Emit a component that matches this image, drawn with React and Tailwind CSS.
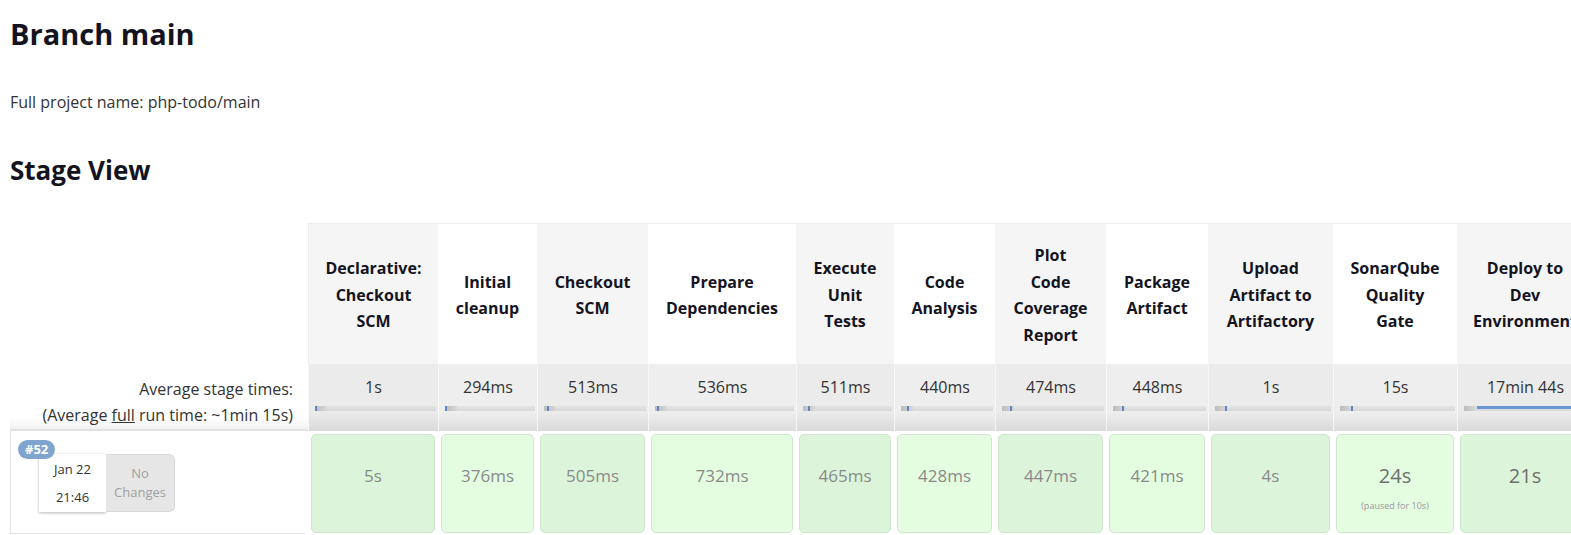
import React from 'react'

const STAGES = [
  { name: ['Declarative:', 'Checkout', 'SCM'], w: 130, avg: '1s', run: '5s', tick: 0 },
  { name: ['Initial', 'cleanup'], w: 99, avg: '294ms', run: '376ms', tick: 0 },
  { name: ['Checkout', 'SCM'], w: 111, avg: '513ms', run: '505ms', tick: 3 },
  { name: ['Prepare', 'Dependencies'], w: 148, avg: '536ms', run: '732ms', tick: 2 },
  { name: ['Execute', 'Unit', 'Tests'], w: 98, avg: '511ms', run: '465ms', tick: 5 },
  { name: ['Code', 'Analysis'], w: 101, avg: '440ms', run: '428ms', tick: 6 },
  { name: ['Plot', 'Code', 'Coverage', 'Report'], w: 111, avg: '474ms', run: '447ms', tick: 8 },
  { name: ['Package', 'Artifact'], w: 102, avg: '448ms', run: '421ms', tick: 9 },
  { name: ['Upload', 'Artifact to', 'Artifactory'], w: 125, avg: '1s', run: '4s', tick: 10 },
  { name: ['SonarQube', 'Quality', 'Gate'], w: 124, avg: '15s', run: '24s', note: '(paused for 10s)', tick: 11, big: true },
  { name: ['Deploy to', 'Dev', 'Environment'], w: 136, avg: '17min 44s', run: '21s', tick: 13, long: true, big: true },
]

function AvgBar({ tick, long }) {
  return (
    <div className="relative ml-[6px] mr-[2px] h-[5px] bg-[linear-gradient(to_bottom,#e4e4e4,#d8d8d8)]">
      <div className="absolute left-0 top-0 h-full w-[12px] bg-[linear-gradient(to_right,#bdbdbd,#c9c9c9,#d8d8d8)]" />
      {long
        ? <div className="absolute top-0 right-0 h-[3px] bg-[#6a97d4]" style={{ left: tick }} />
        : <div className="absolute top-0 h-full w-[2px] bg-[#5a87c8]" style={{ left: tick }} />}
    </div>
  )
}

export default function App() {
  return (
    <div className="w-[1571px] h-[535px] overflow-hidden bg-white font-['Open_Sans',sans-serif] text-[#333]">
      <div className="pl-[10px]">
        <h1 className="pt-[16px] text-[29px] leading-[36px] font-bold text-[#14141f]">Branch main</h1>
        <p className="mt-[38px] text-[16px] leading-[24px] text-[#333]">Full project name: php-todo/main</p>
        <h2 className="mt-[41px] text-[26px] leading-[31px] font-bold text-[#14141f]">Stage View</h2>

        <div className="mt-[37px] flex w-max">
          {/* left column */}
          <div className="w-[298px] shrink-0 flex flex-col">
            <div className="h-[141px]" />
            <div className="h-[67px] pr-[15px] pt-[12px] text-right text-[16px] leading-[26px] text-[#333] bg-[linear-gradient(to_bottom,#fff_82%,#f1f1f1)] border-b-2 border-[#e2e2e2]">
              <p>Average stage times:</p>
              <p>(Average <span className="underline">full</span> run time: ~1min 15s)</p>
            </div>
            <div className="relative h-[103px] border-l border-b border-[#e4e4e4] mr-[3px]">
              <span className="absolute left-[7px] top-[9px] z-10 rounded-full bg-[#7fa5cf] px-[7px] text-[13px] leading-[19px] font-bold text-white">#52</span>
              <div className="ml-[28px] mt-[23px] flex">
                <div className="w-[67px] h-[58px] bg-white shadow-[0_1px_3px_rgba(0,0,0,0.28)] flex flex-col items-center justify-center text-[13px] leading-[28px] text-[#333]">
                  <span>Jan 22</span>
                  <span>21:46</span>
                </div>
                <div className="w-[69px] h-[58px] rounded-r-[6px] border border-l-0 border-[#d8d8d8] bg-[#e6e6e6] flex flex-col items-center justify-center text-[13px] leading-[19px] text-[#a0a0a0]">
                  <span>No</span>
                  <span>Changes</span>
                </div>
              </div>
            </div>
          </div>

          {/* stage columns */}
          {STAGES.map((s, i) => {
            const odd = i % 2 === 0
            return (
              <div key={i} className="shrink-0 flex flex-col" style={{ width: s.w }}>
                <div className={`h-[141px] flex flex-col items-center justify-center pt-[2px] border-t border-[#ececec] text-center text-[16px] leading-[26.5px] font-bold text-[#14141f] whitespace-nowrap ${odd ? 'bg-[#f5f5f5]' : 'bg-white'} ${i === 0 ? 'border-l' : ''}`}>
                  {s.name.map(l => <span key={l}>{l}</span>)}
                </div>
                <div className={`h-[67px] border-l border-[#f7f7f7] ${odd ? 'bg-[linear-gradient(to_bottom,#ebebeb_72%,#d9d9d9)]' : 'bg-[linear-gradient(to_bottom,#eeeeee_72%,#dcdcdc)]'}`}>
                  <p className="pt-[11px] text-center text-[16px] leading-[25px] text-[#333] whitespace-nowrap">{s.avg}</p>
                  <div className="mt-[6px]"><AvgBar tick={s.tick} long={s.long} /></div>
                </div>
                <div className="h-[103px] px-[3px] pt-[3px] pb-[1px]">
                  <div className={`h-full rounded-[5px] border border-[#cfe5cc] text-center ${odd ? 'bg-[#dcf5da]' : 'bg-[#e4fde1]'}`}>
                    <p className={`pt-[28px] leading-[26px] ${s.big ? 'text-[20px] text-[#6f6f6f]' : 'text-[17px] text-[#8a8a8a]'}`}>{s.run}</p>
                    {s.note && <p className="mt-[11px] text-[9px] leading-[12px] text-[#999]">{s.note}</p>}
                  </div>
                </div>
              </div>
            )
          })}
        </div>
      </div>
    </div>
  )
}
